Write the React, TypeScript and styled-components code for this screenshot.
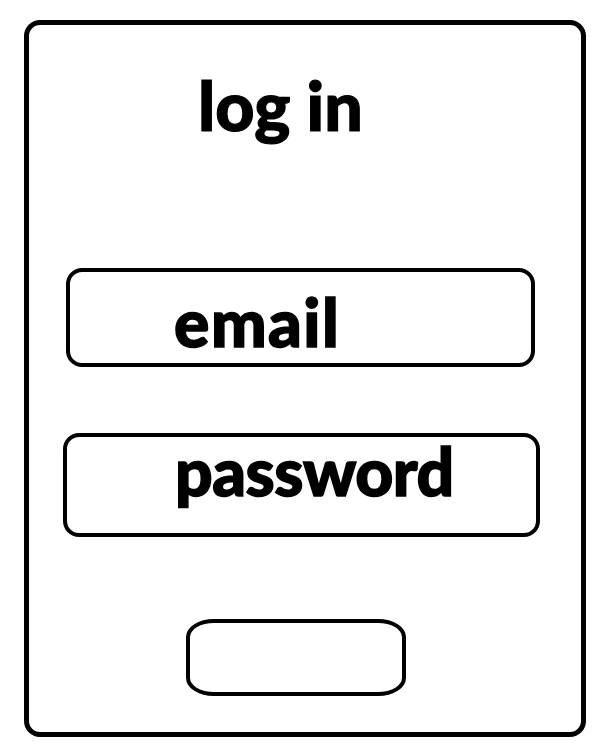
import React from 'react'
import styled, { createGlobalStyle } from 'styled-components'

const GlobalStyle = createGlobalStyle`
    html, body {
        margin: 0;
        padding: 0;
        background: #fff;
    }

    body {
        font-family: Lato, "Open Sans", sans-serif;
        color: #000;
    }
`

const Page = styled.div`
    padding: 20px 0 6px 24px;
`

const Frame = styled.div`
    box-sizing: border-box;
    width: 562px;
    height: 717px;
    border: 5px solid #000;
    border-radius: 16px;
    display: flex;
    flex-direction: column;
    align-items: flex-start;
`

const Title = styled.h1`
    margin: 46px 0 0 169px;
    font-size: 68px;
    line-height: 1;
    font-weight: 900;
    -webkit-text-stroke: 1.2px #000;
`

interface IField {
    width: number
    height: number
    indent: number
    offsetX: number
    offsetY: number
    textTop: number
    tracking: number
}

const Field = styled.div<{ $w: number; $h: number; $x: number; $y: number; $indent: number; $textTop: number; $tracking: number }>`
    box-sizing: border-box;
    width: ${(p) => p.$w}px;
    height: ${(p) => p.$h}px;
    margin: ${(p) => p.$y}px 0 0 ${(p) => p.$x}px;
    padding: ${(p) => p.$textTop}px 0 0 ${(p) => p.$indent}px;
    border: 4px solid #000;
    border-radius: 16px;
    font-size: 66px;
    line-height: 1;
    font-weight: 900;
    letter-spacing: ${(p) => p.$tracking}px;
    -webkit-text-stroke: 1.5px #000;
`

const Button = styled.button`
    box-sizing: border-box;
    width: 220px;
    height: 77px;
    margin: 82px 0 0 157px;
    padding: 0;
    border: 4px solid #000;
    border-radius: 28px / 18px;
    background: #fff;
`

function InputBox({ width, height, indent, offsetX, offsetY, textTop, tracking, children }: IField & { children: React.ReactNode }): JSX.Element {
    return (
        <Field $w={width} $h={height} $x={offsetX} $y={offsetY} $indent={indent} $textTop={textTop} $tracking={tracking}>
            {children}
        </Field>
    )
}

export default function App(): JSX.Element {
    return (
        <>
            <GlobalStyle />
            <Page>
                <Frame>
                    <Title>log in</Title>
                    <InputBox width={469} height={99} offsetX={37} offsetY={129} indent={104} textTop={17} tracking={1.5}>
                        email
                    </InputBox>
                    <InputBox width={477} height={104} offsetX={34} offsetY={66} indent={108} textTop={1} tracking={-0.5}>
                        password
                    </InputBox>
                    <Button aria-label="log in" />
                </Frame>
            </Page>
        </>
    )
}
